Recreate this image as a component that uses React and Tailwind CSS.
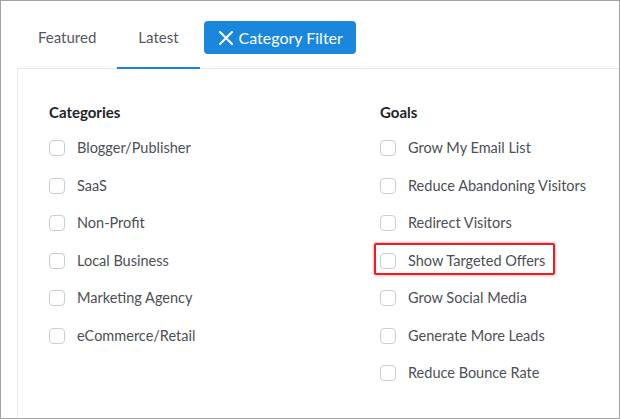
import React from "react";

const categories = [
  "Blogger/Publisher",
  "SaaS",
  "Non-Profit",
  "Local Business",
  "Marketing Agency",
  "eCommerce/Retail",
];

const goals = [
  "Grow My Email List",
  "Reduce Abandoning Visitors",
  "Redirect Visitors",
  "Show Targeted Offers",
  "Grow Social Media",
  "Generate More Leads",
  "Reduce Bounce Rate",
];

// Single checkbox row; the highlighted one gets the red callout box
const CheckRow = ({ label, highlight }) => (
  <div className="relative flex h-[37.5px] items-center gap-3">
    <span className="h-4 w-4 shrink-0 rounded-[4px] border border-[#c9ced6] bg-white" />
    <span className="text-[14.5px] leading-5 text-[#4d4f55]">{label}</span>
    {highlight && (
      <span className="absolute -left-[6px] top-[1px] h-[32px] w-[181px] rounded-[2px] border-2 border-[#ec1c24] shadow-[0_0_3px_rgba(236,28,36,0.6)]" />
    )}
  </div>
);

const App = () => {
  return (
    <div
      className="h-[419px] w-[620px] overflow-hidden border border-[#a3a3a3] bg-white"
      style={{ fontFamily: "Lato, 'Open Sans', sans-serif" }}
    >
      {/* Tabs */}
      <div className="flex h-[67px] items-end pl-4">
        <div className="relative z-10 -mb-px flex h-[48px] items-start px-[21px] pt-[6px]">
          <span className="text-[15px] leading-5 text-[#55585e]">Featured</span>
        </div>
        <div className="relative z-10 -mb-px flex h-[48px] items-start border-b-2 border-[#1a86dc] px-[21px] pt-[6px]">
          <span className="text-[15px] leading-5 text-[#55585e]">Latest</span>
        </div>
        <button className="mb-[14px] ml-1 flex h-[33px] w-[152px] items-center gap-[6px] rounded-[4px] bg-[#1a86dc] pl-[15px] text-[16px] text-white">
          <svg width="14" height="14" viewBox="0 0 14 14" fill="none">
            <path d="M1 1L13 13M13 1L1 13" stroke="white" strokeWidth="2" strokeLinecap="round" />
          </svg>
          Category Filter
        </button>
      </div>

      {/* Filter panel */}
      <div className="ml-4 h-full border-l border-t border-[#e6e9ef] pl-[31px] pt-[33px]">
        <div className="flex">
          <div className="w-[331px]">
            <h3 className="mb-[7.5px] text-[15px] font-bold leading-5 text-[#222428]">Categories</h3>
            {categories.map((c) => (
              <CheckRow key={c} label={c} />
            ))}
          </div>
          <div>
            <h3 className="mb-[7.5px] text-[15px] font-bold leading-5 text-[#222428]">Goals</h3>
            {goals.map((g) => (
              <CheckRow key={g} label={g} highlight={g === "Show Targeted Offers"} />
            ))}
          </div>
        </div>
      </div>
    </div>
  );
};

export default App;
